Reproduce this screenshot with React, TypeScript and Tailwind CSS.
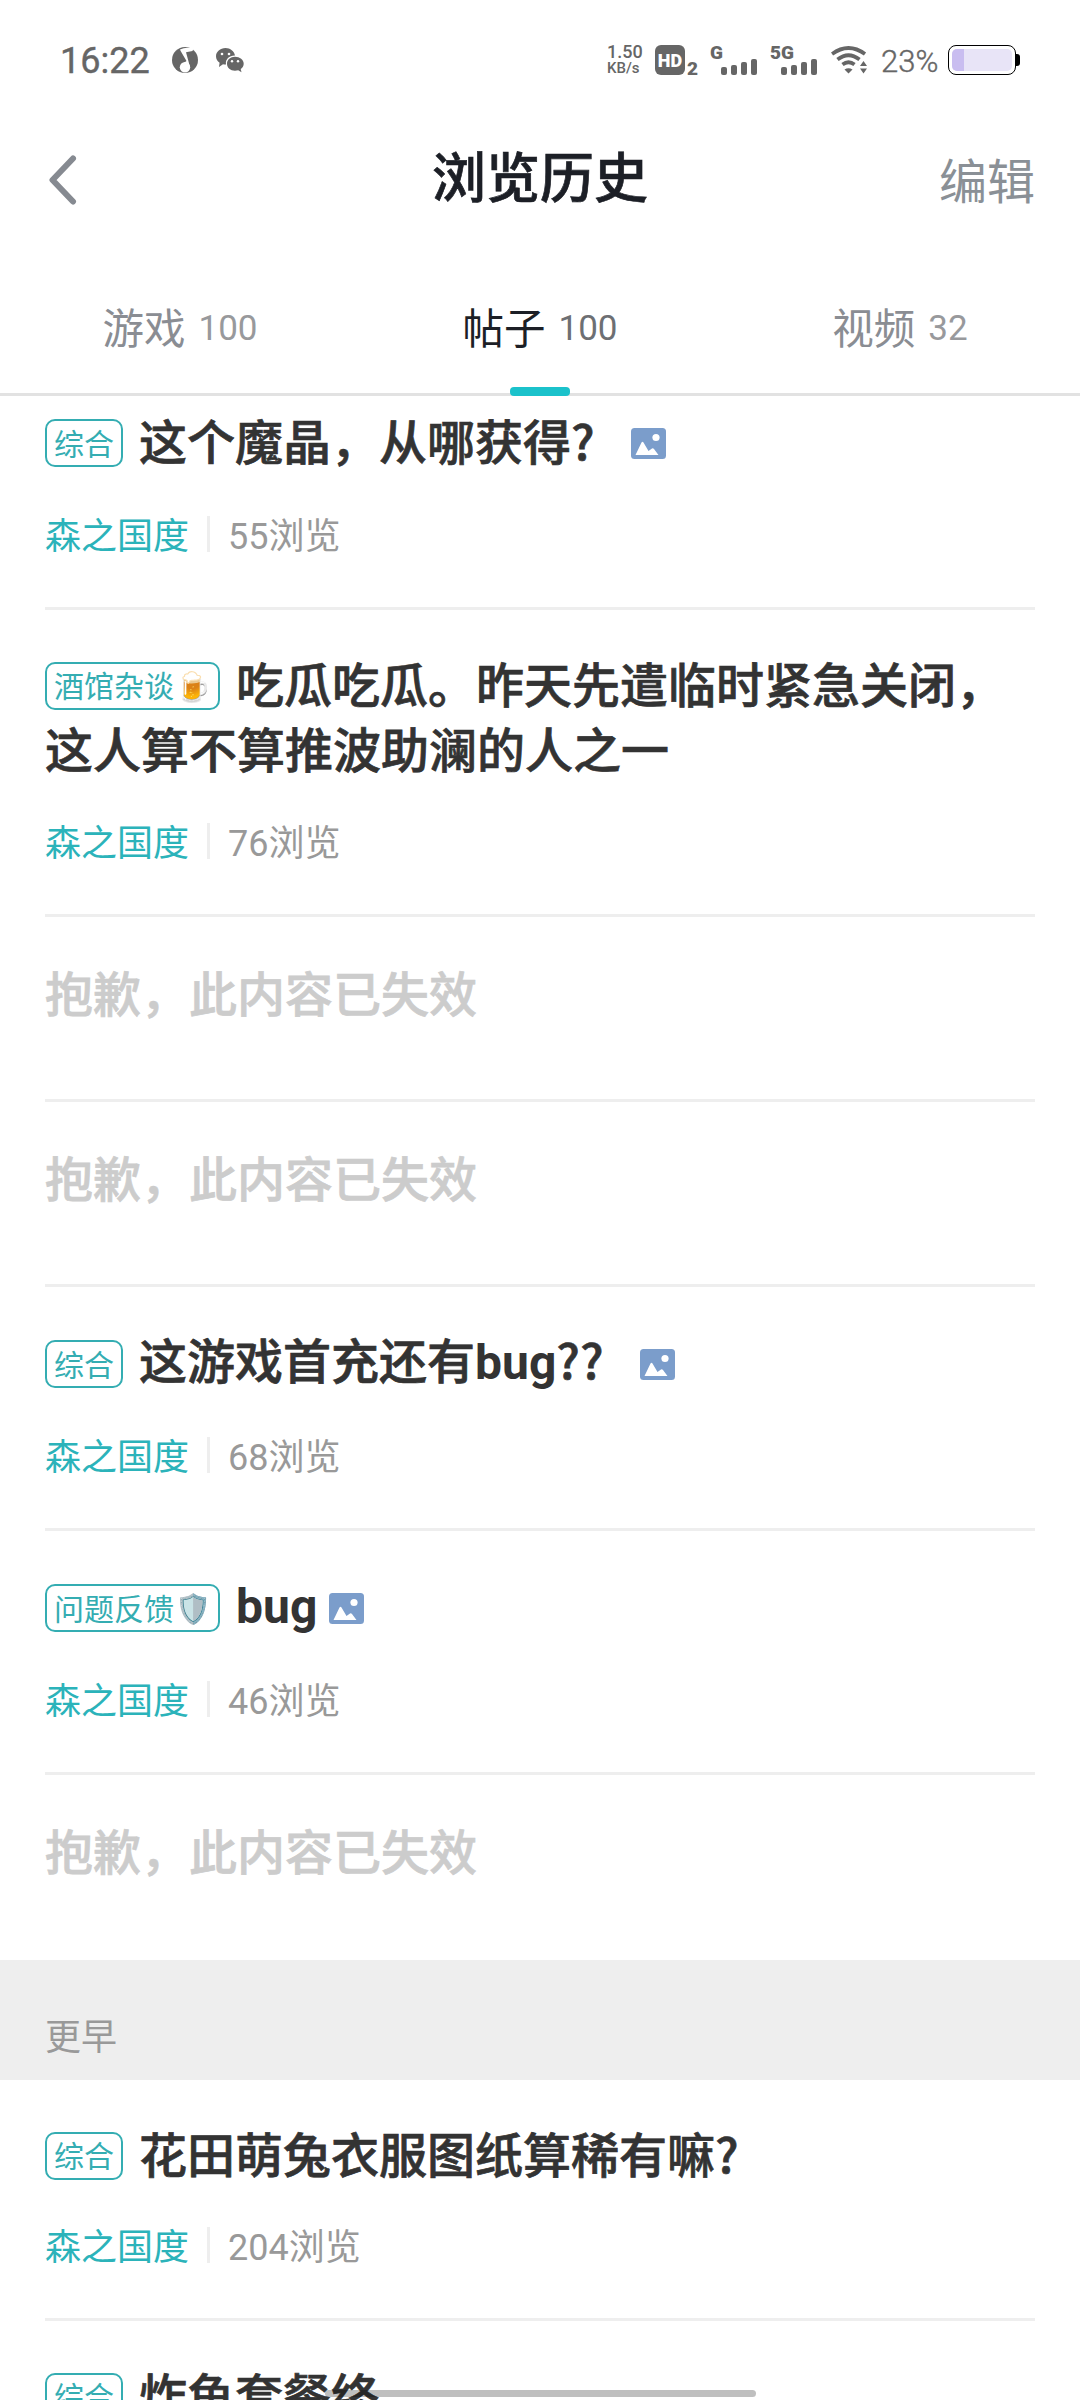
import type { ReactNode } from "react";

type Post = {
  tag?: string;
  emoji?: string;
  title: ReactNode[];
  image?: string;
  views?: number;
};

const BUG = <span className="font-[Roboto] font-bold [-webkit-text-stroke:0]">bug</span>;

const recent: Post[] = [
  { tag: "综合", title: ["这个魔晶，从哪获得?"], image: "ml-[36px]", views: 55 },
  { tag: "酒馆杂谈", emoji: "🍺", title: ["吃瓜吃瓜。昨天先遣临时紧急关闭，", "这人算不算推波助澜的人之一"], views: 76 },
  { title: ["抱歉，此内容已失效"] },
  { title: ["抱歉，此内容已失效"] },
  { tag: "综合", title: [<>这游戏首充还有{BUG}??</>], image: "ml-[36px]", views: 68 },
  { tag: "问题反馈", emoji: "🛡️", title: [BUG], image: "ml-[12px]", views: 46 },
  { title: ["抱歉，此内容已失效"] },
];

const earlier: Post[] = [
  { tag: "综合", title: ["花田萌兔衣服图纸算稀有嘛?"], views: 204 },
  { tag: "综合", title: ["炸鱼套餐终"], views: 31 },
];

function Signal({ label, className }: { label: string; className: string }) {
  return (
    <div className={`relative h-[30px] ${className}`}>
      <span className="absolute left-0 top-0 text-[19px] leading-[15px] font-black">{label}</span>
      <div className="absolute right-0 bottom-0 flex items-end gap-[4px]">
        <i className="w-[6px] h-[8px] rounded-[2px] bg-[#666]" />
        <i className="w-[6px] h-[10px] rounded-[2px] bg-[#666]" />
        <i className="w-[6px] h-[13px] rounded-[2px] bg-[#666]" />
        <i className="w-[6px] h-[16px] rounded-[2px] bg-[#666]" />
      </div>
    </div>
  );
}

function StatusBar() {
  return (
    <div className="h-[120px] pl-[60px] pr-[60px] flex items-center text-[#666] font-[Roboto]">
      <span className="pt-[2px] text-[36px] leading-none [-webkit-text-stroke:0.4px]">16:22</span>
      <svg className="ml-[22px] w-[26px] h-[26px]" viewBox="0 0 26 26">
        <circle cx="13" cy="13" r="13" fill="#666" />
        <circle cx="13" cy="20.200" r="5.200" fill="#fff" />
        <path d="M8 2.500 Q13 .2 18 1 L22 0 L20.500 4 L14 5.200 L18 20 L12 15.800 L14.500 14 L8.500 3.800 Z" fill="#fff" />
      </svg>
      <svg className="ml-[18px] w-[28px] h-[25px]" viewBox="0 0 28 25" fill="#666">
        <path d="M9.500 0C4.200 0 0 3.700 0 8.300c0 2.700 1.400 5 3.600 6.500L3 19l4-2.800c1 .2 2 .3 3 .2-.9-5 3.500-9 9-8.800C18.300 3.200 14.300 0 9.500 0Z" />
        <path d="M19 8.800c-4.600 0-8 3-8 6.900s3.400 7 8 7c1.200 0 2.200-.2 3.200-.5l3.300 2-.8-3.200c1.900-1.300 3-3.200 3-5.300 0-3.900-3.900-6.900-8.700-6.900Z" />
        <g fill="#fff">
          <circle cx="6" cy="6" r="1.300" />
          <circle cx="13" cy="6" r="1.300" />
          <circle cx="16" cy="13.300" r="1.200" />
          <circle cx="22" cy="13.300" r="1.200" />
        </g>
      </svg>

      <div className="ml-auto flex items-center">
        <div className="w-[36px] leading-[16px] font-medium">
          <div className="text-[18px]">1.50</div>
          <div className="text-[15px]">KB/s</div>
        </div>
        <div className="ml-[12px] flex items-end">
          <span className="w-[30px] h-[30px] rounded-[6px] bg-[#666] text-white text-[18px] font-black flex items-center justify-center">HD</span>
          <span className="ml-[2px] text-[19px] leading-[13px] font-black">2</span>
        </div>
        <Signal label="G" className="ml-[12px] w-[47px]" />
        <Signal label="5G" className="ml-[13px] w-[47px]" />
        <svg className="ml-[14px] w-[36px] h-[28px]" viewBox="0 0 36 28" fill="none" stroke="#666" strokeWidth="3.800">
          <path d="M1 8 Q17.500 -4 34 8" />
          <path d="M6.500 13.500 Q17.500 5 28.500 13.500" />
          <path d="M11.500 18.500 Q17.500 14 23.500 18.500" />
          <path d="M13.500 23.500 Q17.500 21 21.500 23.500 L17.500 27.500 Z" fill="#666" stroke="none" />
          <path d="M32.500 15 L36 20 H29 Z M32.500 27.500 L36 22.500 H29 Z" fill="#666" stroke="none" />
        </svg>
        <span className="ml-[14px] w-[56px] pt-[2px] text-[31px] leading-none font-light whitespace-nowrap [-webkit-text-stroke:0.4px]">23%</span>
        <div className="ml-[11px] w-[68px] h-[30px] rounded-[8px] border-[1.500px] border-black p-[3px]">
          <div className="h-full rounded-[5px] bg-[#e8e4f7] overflow-hidden">
            <div className="h-full w-[12px] bg-[#c9bdf0]" />
          </div>
        </div>
        <i className="w-[4px] h-[12px] rounded-r-[3px] bg-black" />
      </div>
    </div>
  );
}

function Tab({ label, count, active }: { label: string; count: number; active?: boolean }) {
  return (
    <div className="relative flex-1 pt-[19px] flex justify-center items-center gap-[13px]">
      <span className={active ? "text-[41.500px] text-[#1c1f26]" : "text-[41.500px] text-[#8a8d93]"}>{label}</span>
      <span className={active ? "mt-[7px] font-[Roboto] text-[35px] text-[#6d6f73]" : "mt-[7px] font-[Roboto] text-[35px] text-[#98999c]"}>{count}</span>
      {active && <i className="absolute left-1/2 -translate-x-1/2 -bottom-[3px] w-[60px] h-[9px] rounded-[4px] bg-[#1bc2cb]" />}
    </div>
  );
}

function ImageIcon() {
  return (
    <svg className="w-[35px] h-[31px]" viewBox="0 0 35 31">
      <rect width="35" height="31" rx="3.500" fill="#7b9dcb" />
      <circle cx="25" cy="9.500" r="3.600" fill="#fff" />
      <path d="M4.500 27 L10.500 14.500 Q11.500 12.800 12.500 14.500 L17.500 23 L21 20.500 Q22 19.800 23 21 L27.500 27 Z" fill="#fff" />
    </svg>
  );
}

function Tag({ children }: { children: ReactNode }) {
  return (
    <span className="shrink-0 h-[48px] mr-[16px] pb-[2px] px-[7px] flex items-center rounded-[10px] border-2 border-[#34adb2] text-[30px] text-[#34adb2]">
      {children}
    </span>
  );
}

function Row({ post, first, last }: { post: Post; first?: boolean; last?: boolean }) {
  const border = last ? "" : "border-b-[3px] border-[#eee]";
  const title = "text-[48px] font-medium [-webkit-text-stroke:0.7px]";

  if (!post.views) {
    return (
      <div className={`mx-[45px] h-[185px] pt-[44px] ${border}`}>
        <div className={`h-[66px] pb-[6px] flex items-center text-[#ccc] ${title}`}>{post.title[0]}</div>
      </div>
    );
  }

  return (
    <div className={`mx-[45px] ${first ? "pt-[14px]" : "pt-[44px]"} ${border}`}>
      <div className={`${post.image ? "h-[66px]" : "h-[63px]"} flex items-center whitespace-nowrap text-[#333]`}>
        <Tag>
          {post.tag}
          {post.emoji && <span className="w-[37px] text-[29px] flex justify-center">{post.emoji}</span>}
        </Tag>
        <span className={`pb-[8px] ${title}`}>{post.title[0]}</span>
        {post.image && <span className={post.image}><ImageIcon /></span>}
      </div>
      {post.title[1] && <div className={`h-[66px] pb-[7px] flex items-center text-[#333] ${title}`}>{post.title[1]}</div>}
      <div className="h-[131px] pt-[39px] flex items-start text-[36px] leading-[36px]">
        <span className="text-[#2bb3ba]">森之国度</span>
        <i className="mt-px ml-[18px] w-[3px] h-[36px] bg-[#eee]" />
        <span className="ml-[18px] text-[#999]"><span className="font-[Roboto]">{post.views}</span>浏览</span>
      </div>
    </div>
  );
}

export default function App() {
  return (
    <div className="relative w-[1080px] h-[2400px] overflow-hidden bg-white font-['Noto_Sans_CJK_SC',sans-serif]">
      <StatusBar />

      <div className="h-[120px] px-[45px] grid grid-cols-3 items-center">
        <svg className="w-[72px] h-[50px]" viewBox="0 0 72 50" fill="none" stroke="#868a91" strokeWidth="6" strokeLinecap="round" strokeLinejoin="round">
          <path d="M28 3.500 L7.500 25 L28 46.500" />
        </svg>
        <h1 className="pb-[11px] text-center text-[54px] leading-none font-medium text-[#1c1f26] [-webkit-text-stroke:0.7px]">浏览历史</h1>
        <span className="pb-[4px] text-right text-[48px] leading-none text-[#8a9096]">编辑</span>
      </div>

      <div className="h-[156px] flex border-b-[3px] border-[#e2e2e2]">
        <Tab label="游戏" count={100} />
        <Tab label="帖子" count={100} active />
        <Tab label="视频" count={32} />
      </div>

      {recent.map((post, i) => (
        <Row key={i} post={post} first={i === 0} last={i === recent.length - 1} />
      ))}
      <div className="h-[120px] px-[45px] pt-[28px] flex items-center bg-[#eee] text-[36px] text-[#999]">更早</div>
      {earlier.map((post, i) => (
        <Row key={i} post={post} />
      ))}

      {/* Gesture bar */}
      <div className="absolute left-[325px] bottom-[3px] w-[431px] h-[7px] rounded-full bg-black/25" />
    </div>
  );
}
